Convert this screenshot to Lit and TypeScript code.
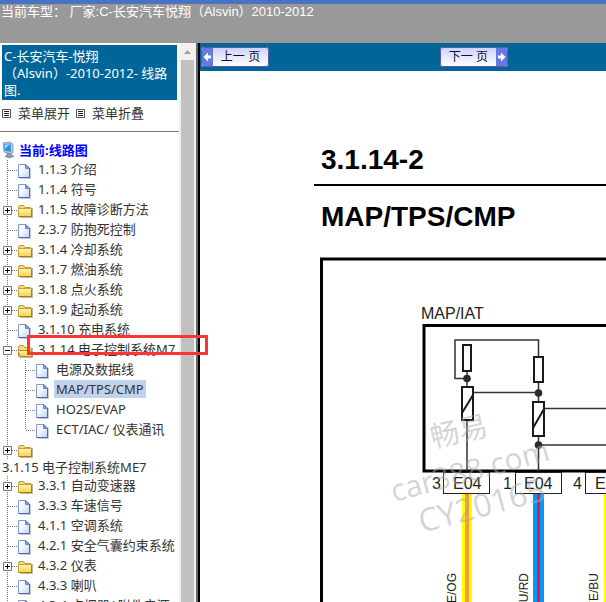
import { LitElement, html, svg, css, nothing } from "lit";
import { customElement } from "lit/decorators.js";
import { classMap } from "lit/directives/class-map.js";

type Kind = "page" | "folder" | "open";
interface Node {
  label: string;
  kind: Kind;
  wrapped?: boolean;
  selected?: boolean;
  children?: Node[];
}

const TREE: Node[] = [
  { label: "1.1.3 介绍", kind: "page" },
  { label: "1.1.4 符号", kind: "page" },
  { label: "1.1.5 故障诊断方法", kind: "folder" },
  { label: "2.3.7 防抱死控制", kind: "page" },
  { label: "3.1.4 冷却系统", kind: "folder" },
  { label: "3.1.7 燃油系统", kind: "folder" },
  { label: "3.1.8 点火系统", kind: "folder" },
  { label: "3.1.9 起动系统", kind: "folder" },
  { label: "3.1.10 充电系统", kind: "page" },
  {
    label: "3.1.14 电子控制系统M7",
    kind: "open",
    children: [
      { label: "电源及数据线", kind: "page" },
      { label: "MAP/TPS/CMP", kind: "page", selected: true },
      { label: "HO2S/EVAP", kind: "page" },
      { label: "ECT/IAC/ 仪表通讯", kind: "page" },
    ],
  },
  { label: "3.1.15 电子控制系统ME7", kind: "folder", wrapped: true },
  { label: "3.3.1 自动变速器", kind: "folder" },
  { label: "3.3.3 车速信号", kind: "page" },
  { label: "4.1.1 空调系统", kind: "page" },
  { label: "4.2.1 安全气囊约束系统", kind: "page" },
  { label: "4.3.2 仪表", kind: "folder" },
  { label: "4.3.3 喇叭", kind: "page" },
  { label: "4.3.4 点烟器/ 附件电源", kind: "page" },
];

const pageIcon = html`<svg class="icon" width="18" height="20" viewBox="0 0 18 20" aria-hidden="true">
  <defs>
    <linearGradient id="pg" x1="0" y1="0" x2="1" y2="1">
      <stop offset="0" stop-color="#fff" /><stop offset=".4" stop-color="#f4f9ff" /><stop offset="1" stop-color="#b9d3f7" />
    </linearGradient>
  </defs>
  <path d="M2 18.5H12.500V8" fill="none" stroke="#c9c9cf" />
  <path d="M.5 4.500H8L11.500 8V17.500H.5Z" fill="url(#pg)" stroke="#8797cf" />
  <path d="M11.500 8V17.500H.5" fill="none" stroke="#5767a8" />
  <path d="M7.500 4.500V8.500H11.500Z" fill="#7f9de0" stroke="#5a76c0" stroke-width=".8" />
</svg>`;

const folderIcon = (open: boolean) => html`<svg class="icon" width="18" height="20" viewBox="0 0 18 20" aria-hidden="true">
  <defs>
    <linearGradient id="fd" x1="0" y1="0" x2="0" y2="1">
      <stop offset="0" stop-color="#fff6b0" /><stop offset="1" stop-color="#f8d04e" />
    </linearGradient>
  </defs>
  <path d="M2 17.500H14.500V8" fill="none" stroke="#b9b5a8" />
  <path d="M.5 7L1.500 5.500H5.500L7 7.500H12.500L13.500 8.500V16.500H.5Z" fill="#f6dc78" stroke="#c39a35" />
  ${open
    ? svg`<path d="M-.5 10.500H12L14.500 16.500H2.500Z" fill="url(#fd)" stroke="#b98d25" />`
    : svg`<path d="M.5 8.500H13.500V16.500H.5Z" fill="url(#fd)" stroke="#c9a23c" /><path d="M1 16.500H13.500V9" fill="none" stroke="#a37c25" />`}
</svg>`;

const joint = (kind: Kind, last = false, nested = false) => html`<svg
  class="joint"
  width="18"
  height="20"
  viewBox="0 0 18 20"
  aria-hidden="true"
>
  <path d="M7.500 0V${last ? 10 : 20}M8 10.500H18" fill="none" stroke="#777" stroke-dasharray="1 1" />
  ${kind === "page" || nested
    ? nothing
    : svg`<path d="M3.500 6.500H11.500V14.500H3.500Z" fill="#fff" stroke="#777" /><path d="M5 10.500H10${kind === "folder" ? "M7.500 8V13" : ""}" fill="none" stroke="#000" />`}
</svg>`;

const trunk = html`<svg class="joint" width="18" height="20" aria-hidden="true">
  <path d="M7.500 0V20" fill="none" stroke="#777" stroke-dasharray="1 1" />
</svg>`;

const listIcon = html`<svg width="9" height="9" viewBox="0 0 9 9" aria-hidden="true">
  <path d="M.5 .5H8.500V8.500H.5Z" fill="#fff" stroke="#555" />
  <path d="M2 2.500H7M2 4.500H7M2 6.500H7" stroke="#222" />
</svg>`;

@customElement("app-root")
export class AppRoot extends LitElement {
  static styles = css`
    :host {
      display: flex;
      flex-direction: column;
      height: 100vh;
      overflow: hidden;
      background: #fff;
      font: 13px/17px "Noto Sans", "Open Sans", "Noto Sans CJK SC", sans-serif;
      text-spacing-trim: space-all;
      color: #333;
    }
    button {
      font: inherit;
      color: inherit;
      border: 0;
      padding: 0;
      background: none;
      cursor: pointer;
    }
    a {
      color: inherit;
      text-decoration: none;
    }
    ul {
      list-style: none;
      margin: 0;
      padding: 0;
    }
    svg {
      display: block;
      flex: none;
    }
    header {
      flex: none;
      box-sizing: border-box;
      height: 43px;
      border-top: 4px solid #4a72c4;
      background: #999;
      color: #fff;
      padding: 0 1px;
      font: 13px/15px "Liberation Sans", "Noto Sans CJK SC", sans-serif;
      white-space: pre;
    }
    .body {
      flex: 1;
      min-height: 0;
      display: flex;
      position: relative;
    }
    nav {
      flex: none;
      width: 179px;
      overflow: hidden;
      white-space: nowrap;
    }
    .title {
      margin: 2px 2px 0;
      padding: 3px 2px 1px;
      background: #069;
      color: #fff;
      font-size: 13px;
    }
    .tools {
      display: flex;
      gap: 6px;
      padding: 4px 2px 9px;
      border-bottom: 1px solid #777;
    }
    .tools button {
      display: flex;
      align-items: center;
      gap: 7px;
      line-height: 18px;
    }
    .current {
      display: flex;
      align-items: center;
      gap: 3px;
      margin-top: 8px;
      padding-left: 2px;
      height: 20px;
      font-weight: 700;
      color: #00f;
    }
    .row {
      display: flex;
      height: 20px;
      line-height: 18px;
    }
    .row a {
      display: block;
      height: 18px;
      padding: 0 2px;
      align-self: flex-start;
    }
    .selected a {
      background: #c1d2ee;
    }
    .wrapped .row {
      height: 18px;
    }
    .wrapped .below {
      display: block;
      line-height: 18px;
      padding-left: 2px;
    }
    .scroll {
      flex: none;
      width: 17px;
      display: flex;
      flex-direction: column;
      align-items: center;
      background: #f1f1f1;
    }
    .thumb {
      flex: 1;
      width: 13px;
      background: #c1c1c1;
    }
    .divider {
      flex: none;
      width: 2px;
      border-left: 2px solid #666;
      background: #000;
    }
    main {
      flex: 1;
      min-width: 0;
      display: flex;
      flex-direction: column;
    }
    .bar {
      flex: none;
      display: grid;
      grid-template-columns: 59% 1fr;
      align-items: center;
      height: 28px;
      padding-left: 1px;
      background: #069;
    }
    .pager {
      box-sizing: border-box;
      display: flex;
      width: 68px;
      height: 20px;
      border: 1px solid #fff;
      border-radius: 3px;
      outline: 1px solid #5a5aa8;
      outline-offset: -1px;
      background: linear-gradient(#cfd2fa, #fff);
      color: #112;
      font: 12px/18px "Liberation Sans", "Noto Sans CJK SC", sans-serif;
      overflow: hidden;
    }
    .pager span {
      flex: 1;
      white-space: nowrap;
    }
    .sheet {
      flex: 1;
      min-height: 0;
      display: flex;
      flex-direction: column;
      padding: 73px 0 0 114px;
      color: #000;
      font-family: "Liberation Sans", sans-serif;
    }
    h1,
    h2 {
      flex: none;
      margin: 0;
      padding-left: 7px;
      font-size: 28px;
      line-height: 32px;
      font-weight: 700;
    }
    h1 {
      padding-bottom: 8px;
      border-bottom: 2px solid #000;
    }
    h2 {
      padding-top: 15px;
    }
    .diagram {
      flex: 1;
      width: 100%;
      min-height: 0;
      margin-top: 7px;
    }
    .label {
      font-size: 16px;
      fill: #222;
    }
    .wire {
      font-size: 12px;
      fill: #222;
    }
    .mark {
      fill: #aaa;
      fill-opacity: 0.5;
      font-family: "Open Sans", "Noto Sans CJK SC", sans-serif;
    }
    .callout {
      position: absolute;
      box-sizing: border-box;
      left: 27px;
      top: 292px;
      width: 181px;
      height: 20px;
      border: 3px solid #f93535;
      pointer-events: none;
    }
  `;

  private row(node: Node, last = false, nested = false) {
    const link = html`<a href="#" class=${classMap({ below: !!node.wrapped })}>${node.label}</a>`;
    return html`<li class=${classMap({ wrapped: !!node.wrapped, selected: !!node.selected })}>
      <div class="row">
        ${nested ? trunk : nothing}${joint(node.kind, last, nested)}
        ${node.kind === "page" ? pageIcon : folderIcon(node.kind === "open")}
        ${node.wrapped ? nothing : link}
      </div>
      ${node.wrapped ? link : nothing}
      ${node.children
        ? html`<ul>
            ${node.children.map((c, i) => this.row(c, i === node.children!.length - 1, true))}
          </ul>`
        : nothing}
    </li>`;
  }

  private diagram() {
    return html`<svg class="diagram" role="img" aria-label="MAP/IAT">
      <rect x="7.500" y="19" width="150%" height="150%" fill="none" stroke="#000" stroke-width="3" />
      <text class="label" x="107" y="79">MAP/IAT</text>
      <g fill="none" stroke="#000" stroke-width="3">
        <rect x="110" y="85.500" width="150%" height="145.500" />
      </g>
      <g fill="none" stroke="#333" stroke-width="1.500">
        <path d="M153 138.500H141V100H224.500V116M153 131V146M224.500 142V162M224.500 196V231M153 180V231M158 152.500H224" />
        <line x1="230" y1="168.500" x2="100%" y2="168.500" />
        <line x1="224" y1="205" x2="100%" y2="205" />
      </g>
      <g fill="#fff" stroke="#1a1a1a" stroke-width="2">
        <rect x="149" y="105" width="8" height="26" />
        <rect x="148" y="147" width="11" height="33" />
        <rect x="220" y="117" width="9" height="25" />
        <rect x="219" y="162" width="11" height="34" />
        <path d="M148 173L159 155M219 188L230 169" />
      </g>
      <g fill="#2a2a2a">
        <circle cx="153" cy="138.500" r="3.800" />
        <circle cx="224.500" cy="153" r="3.800" />
        <circle cx="224.500" cy="205" r="3.800" />
      </g>
      <g fill="#fff" stroke="#222">
        <rect x="129.500" y="232.500" width="46" height="21" />
        <rect x="201.500" y="232.500" width="46" height="21" />
        <rect x="271.500" y="232.500" width="46" height="21" />
      </g>
      <rect x="148" y="254" width="10" height="100%" fill="#ff0" />
      <rect x="151" y="254" width="4" height="100%" fill="#f93" />
      <rect x="219" y="254" width="11" height="100%" fill="#09f" />
      <rect x="223" y="254" width="3" height="100%" fill="#f01838" />
      <rect x="290" y="254" width="10" height="100%" fill="#ff0" />
      <g class="label">
        <text x="118" y="249">3</text>
        <text x="139" y="249">E04</text>
        <text x="189" y="249">1</text>
        <text x="210" y="249">E04</text>
        <text x="259" y="249">4</text>
        <text x="281" y="249">E04</text>
      </g>
      <g class="wire" text-anchor="end">
        <text transform="translate(142 333) rotate(-90)">YE/OG</text>
        <text transform="translate(214 333) rotate(-90)">BU/RD</text>
        <text transform="translate(284 333) rotate(-90)">YE/BU</text>
      </g>
      <g class="mark">
        <text transform="translate(119 208) rotate(-13)" font-size="29">畅易</text>
        <text transform="translate(80 262) rotate(-15)" font-size="30">car388.com</text>
        <text transform="translate(108 293) rotate(-15)" font-size="32">CY20165</text>
      </g>
    </svg>`;
  }

  render() {
    return html`
      <header>当前车型： 厂家:C-长安汽车悦翔（Alsvin）2010-2012</header>
      <div class="body">
        <nav>
          <div class="title">C-长安汽车-悦翔<br />（Alsvin）-2010-2012- 线路<br />图.</div>
          <div class="tools">
            <button>${listIcon}菜单展开</button>
            <button>${listIcon}菜单折叠</button>
          </div>
          <a class="current" href="#">
            <svg width="14" height="18" viewBox="0 0 14 18" aria-hidden="true">
              <path d="M1 2L8 1L11 3V12L9 13L2 11Z" fill="#b9c6d8" stroke="#8896ae" stroke-width=".8" />
              <path d="M2 3L8.500 2.500L9 11L2.500 9.500Z" fill="#2493e8" />
              <path d="M2.500 3.500L8 3L3 8Z" fill="#8fd3ff" />
              <path d="M5 12L9 13V14L12 15L8 17L3 15.500L5 14Z" fill="#8f98b8" stroke="#66709a" stroke-width=".6" />
            </svg>
            当前:线路图
          </a>
          <ul>
            ${TREE.map((n) => this.row(n))}
          </ul>
        </nav>
        <div class="scroll">
          <svg width="17" height="17" viewBox="0 0 17 17" aria-hidden="true"><path d="M5 11L8.500 7L12 11Z" fill="#a0a0a0" /></svg>
          <div class="thumb"></div>
        </div>
        <div class="divider"></div>
        <main>
          <div class="bar">
            <button class="pager">
              <svg width="11" height="18" viewBox="0 0 11 18" aria-hidden="true">
                <path d="M0 0H11V18H0Z" fill="#6878e0" />
                <path d="M1.500 9L6 4.500V7.500H9V10.500H6V13.500Z" fill="#fff" />
              </svg>
              <span>上一 页</span>
            </button>
            <button class="pager">
              <span>下一 页</span>
              <svg width="11" height="18" viewBox="0 0 11 18" aria-hidden="true">
                <path d="M0 0H11V18H0Z" fill="#6878e0" />
                <path d="M9.500 9L5 4.500V7.500H2V10.500H5V13.500Z" fill="#fff" />
              </svg>
            </button>
          </div>
          <section class="sheet">
            <h1>3.1.14-2</h1>
            <h2>MAP/TPS/CMP</h2>
            ${this.diagram()}
          </section>
        </main>
        <div class="callout"></div>
      </div>
    `;
  }
}
